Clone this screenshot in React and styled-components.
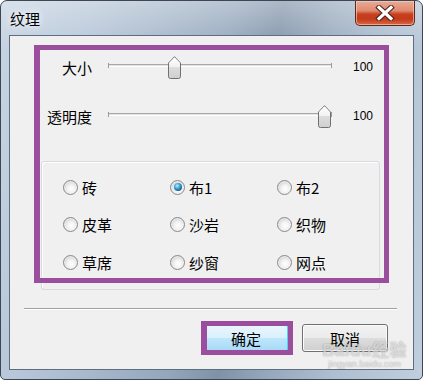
import React from "react";
import styled, { createGlobalStyle } from "styled-components";

const GlobalStyle = createGlobalStyle`
  html, body { margin: 0; padding: 0; background: #ffffff; }
  body { font-family: "Noto Sans CJK SC", "Noto Sans", sans-serif; }
  * { box-sizing: border-box; }
`;

const PURPLE = "#9b4d9e";

const Window = styled.div`
  position: relative;
  width: 423px;
  height: 380px;
  display: flex;
  flex-direction: column;
  border: 1px solid #3c4655;
  border-radius: 7px 7px 5px 5px;
  overflow: hidden;
  background:
    linear-gradient(180deg, rgba(255,255,255,0.35) 0%, rgba(255,255,255,0.05) 12%, rgba(255,255,255,0) 100%),
    linear-gradient(100deg, #c4d2e1 0%, #b6c6d8 18%, #a7b8cb 32%, #93a6bb 48%, #7f92a8 58%, #95a7bb 68%, #aebfd1 82%, #c0cedd 100%);
`;

const TitleBar = styled.div`
  height: 34px;
  display: flex;
  align-items: flex-start;
  justify-content: space-between;
  padding-left: 9px;
`;

const Title = styled.div`
  margin-top: 9px;
  font-size: 15px;
  line-height: 18px;
  color: #000;
  text-shadow: 0 0 6px rgba(255,255,255,0.9), 0 0 10px rgba(255,255,255,0.7);
`;

const CloseButton = styled.div`
  width: 60px;
  height: 25px;
  margin-right: 7px;
  border: 1px solid #5a2a22;
  border-top: none;
  border-radius: 0 0 5px 5px;
  display: flex;
  align-items: center;
  justify-content: center;
  background: linear-gradient(180deg, #e9ab98 0%, #df8b70 40%, #c8401f 55%, #c33b1c 75%, #d86a45 100%);
  box-shadow: inset 0 0 0 1px rgba(255,210,190,0.6);
`;

const Client = styled.div`
  position: relative;
  flex: 1;
  margin: 0 8px 9px 8px;
  border: 1px solid #5e6d80;
  background: #f0f0f0;
  display: flex;
  flex-direction: column;
`;

const SliderSection = styled.div`
  display: flex;
  flex-direction: column;
  gap: 25px;
  padding-top: 19px;
`;

const SliderRow = styled.div`
  display: flex;
  align-items: center;
  height: 24px;
`;

const SliderLabel = styled.div`
  width: 82px;
  text-align: right;
  font-size: 15px;
  color: #000;
`;

const TrackWrap = styled.div`
  position: relative;
  width: 224px;
  height: 24px;
  margin-left: 16px;
`;

const TrackLine = styled.div`
  position: absolute;
  left: 0;
  right: 0;
  top: 9px;
  height: 3px;
  border-top: 1px solid #a8a8a8;
  border-bottom: 1px solid #ffffff;
  background: #e3e3e3;
  &::before, &::after {
    content: "";
    position: absolute;
    top: -2px;
    width: 1px;
    height: 5px;
    background: #9a9a9a;
  }
  &::before { left: 0; }
  &::after { right: 0; }
`;

const Thumb = styled.svg`
  position: absolute;
  top: 1px;
  width: 13px;
  height: 23px;
`;

const SliderValue = styled.div`
  margin-left: 21px;
  font-family: "Liberation Sans", Arial, sans-serif;
  font-size: 12px;
  color: #000;
`;

const GroupBox = styled.div`
  margin-top: 33px;
  margin-left: 31px;
  width: 339px;
  height: 129px;
  border: 1px solid #d5dbe0;
  border-radius: 3px;
  box-shadow: inset 1px 1px 0 #ffffff;
  padding: 13px 0 0 21px;
  display: grid;
  grid-template-columns: 107px 107px 107px;
  grid-auto-rows: 24px;
  row-gap: 13.5px;
`;

const RadioItem = styled.div`
  display: flex;
  align-items: center;
  gap: 4px;
  font-size: 15px;
  color: #000;
`;

const RadioCircle = styled.span`
  position: relative;
  width: 15px;
  height: 15px;
  border-radius: 50%;
  border: 1px solid #8a8a8a;
  background: radial-gradient(circle at 55% 60%, #ffffff 0%, #f3f3f3 35%, #d2d2d2 75%, #b5b5b5 100%);
  box-shadow: inset 0 0 0 1px rgba(255,255,255,0.5);
  flex-shrink: 0;
  &::after {
    content: "";
    display: ${(p) => (p.checked ? "block" : "none")};
    position: absolute;
    left: 2.5px;
    top: 2.5px;
    width: 8px;
    height: 8px;
    border-radius: 50%;
    background: radial-gradient(circle at 40% 35%, #bff0ff 0%, #3aa0d6 40%, #145a84 75%, #0a3350 100%);
  }
`;

const Separator = styled.div`
  margin-top: 18px;
  margin-left: 14px;
  width: 373px;
  height: 1px;
  background: #a0a0a0;
  box-shadow: 0 1px 0 #ffffff;
`;

const ButtonRow = styled.div`
  margin-top: 15px;
  display: flex;
  justify-content: flex-end;
  gap: 13px;
  padding-right: 25px;
`;

const ButtonWrap = styled.div`
  position: relative;
`;

const Button = styled.div`
  width: 86px;
  height: 28px;
  border: 1px solid ${(p) => (p.primary ? "#3c7fb1" : "#707070")};
  border-radius: 3px;
  display: flex;
  align-items: center;
  justify-content: center;
  font-size: 15px;
  color: #000;
  background: ${(p) =>
    p.primary
      ? "linear-gradient(180deg, #eaf6fd 0%, #d9f0fc 50%, #bee6fd 51%, #a7d9f5 100%)"
      : "linear-gradient(180deg, #f2f2f2 0%, #ebebeb 50%, #dddddd 51%, #cfcfcf 100%)"};
  box-shadow: inset 0 0 0 1px ${(p) => (p.primary ? "#48d4fb" : "#fcfcfc")};
`;

const Highlight = styled.div`
  position: absolute;
  border: 5px solid ${PURPLE};
  pointer-events: none;
`;

const MainHighlight = styled(Highlight)`
  left: 24px;
  top: 9px;
  width: 355px;
  height: 238px;
  border-left-width: 6px;
`;

const ButtonHighlight = styled(Highlight)`
  left: -2px;
  right: -4px;
  top: -3px;
  bottom: -3px;
  border-left-width: 6px;
`;

const Watermark = styled.div`
  position: absolute;
  right: 6px;
  bottom: 0px;
  display: flex;
  flex-direction: column;
  align-items: center;
  pointer-events: none;
  color: rgba(255, 255, 255, 0.6);
  text-shadow: 0 0 1px rgba(0,0,0,0.25), 0 0 2px rgba(0,0,0,0.15);
  font-family: "Liberation Sans", Arial, "Noto Sans CJK SC", sans-serif;
`;

const WatermarkMain = styled.div`
  font-size: 17px;
  font-weight: bold;
  line-height: 17px;
  letter-spacing: 0.5px;
`;

const WatermarkSub = styled.div`
  font-size: 9px;
  line-height: 10px;
`;

function SliderThumb({ pos }) {
  return (
    <Thumb viewBox="0 0 13 23" style={{ left: `${pos}px` }}>
      <defs>
        <linearGradient id="thumbg" x1="0" y1="0" x2="0" y2="1">
          <stop offset="0" stopColor="#ffffff" />
          <stop offset="0.45" stopColor="#f2f2f2" />
          <stop offset="0.5" stopColor="#dcdcdc" />
          <stop offset="1" stopColor="#cfcfcf" />
        </linearGradient>
      </defs>
      <path
        d="M0.5 7 L6.5 0.7 L12.5 7 V20.5 Q12.5 22.5 10.5 22.5 H2.5 Q0.5 22.5 0.5 20.5 Z"
        fill="url(#thumbg)"
        stroke="#707070"
        strokeWidth="1"
      />
      <path d="M1.5 7.3 L6.5 2 L11.5 7.3" fill="none" stroke="#ffffff" strokeWidth="1" />
    </Thumb>
  );
}

function Slider({ label, value, pos }) {
  return (
    <SliderRow>
      <SliderLabel>{label}</SliderLabel>
      <TrackWrap>
        <TrackLine />
        <SliderThumb pos={pos} />
      </TrackWrap>
      <SliderValue>{value}</SliderValue>
    </SliderRow>
  );
}

const textures = [
  ["砖", false],
  ["布1", true],
  ["布2", false],
  ["皮革", false],
  ["沙岩", false],
  ["织物", false],
  ["草席", false],
  ["纱窗", false],
  ["网点", false],
];

export default function App() {
  return (
    <>
      <GlobalStyle />
      <Window>
        <TitleBar>
          <Title>纹理</Title>
          <CloseButton>
            <svg width="20" height="16" viewBox="0 0 20 16">
              <path d="M4 2.5 L16 13.5 M16 2.5 L4 13.5" stroke="#4a2018" strokeWidth="5.2" strokeLinecap="square" />
              <path d="M4 2.5 L16 13.5 M16 2.5 L4 13.5" stroke="#ffffff" strokeWidth="3.2" strokeLinecap="square" />
            </svg>
          </CloseButton>
        </TitleBar>
        <Client>
          <SliderSection>
            <Slider label="大小" value="100" pos={60} />
            <Slider label="透明度" value="100" pos={210} />
          </SliderSection>
          <GroupBox>
            {textures.map(([name, checked]) => (
              <RadioItem key={name}>
                <RadioCircle checked={checked} />
                {name}
              </RadioItem>
            ))}
          </GroupBox>
          <Separator />
          <ButtonRow>
            <ButtonWrap>
              <Button primary>确定</Button>
              <ButtonHighlight />
            </ButtonWrap>
            <ButtonWrap>
              <Button>取消</Button>
            </ButtonWrap>
          </ButtonRow>
          <MainHighlight />
          <Watermark>
            <WatermarkMain>Baidu经验</WatermarkMain>
            <WatermarkSub>jingyan.baidu.com</WatermarkSub>
          </Watermark>
        </Client>
      </Window>
    </>
  );
}
